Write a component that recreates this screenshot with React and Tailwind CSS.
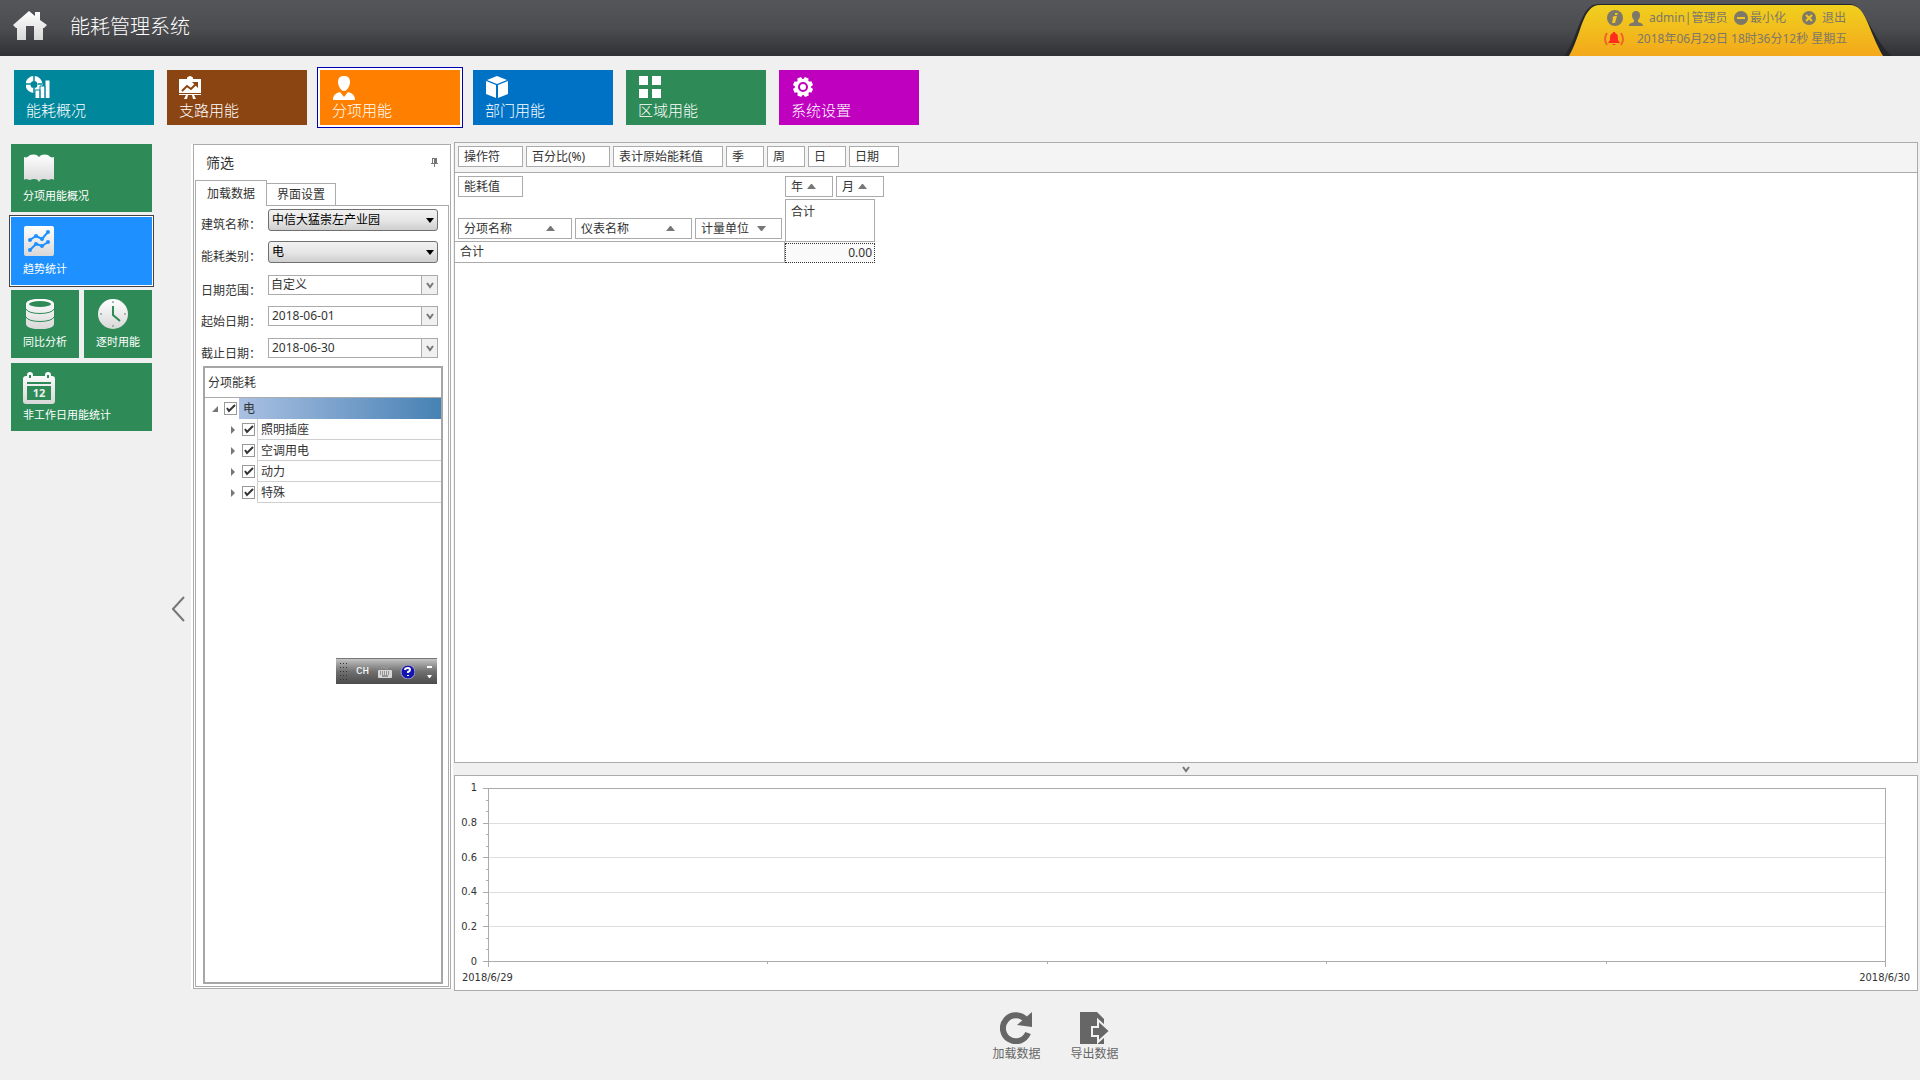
import React, { useState } from "react";

const navItems = [
  { label: "能耗概况", color: "bg-[#00879c]", icon: OverviewIcon },
  { label: "支路用能", color: "bg-[#8b4513]", icon: BoardIcon },
  { label: "分项用能", color: "bg-[#ff8000]", icon: PersonIcon, active: true },
  { label: "部门用能", color: "bg-[#0072c6]", icon: CubeIcon },
  { label: "区域用能", color: "bg-[#2e8b57]", icon: SquaresIcon },
  { label: "系统设置", color: "bg-[#bf00bf]", icon: GearIcon },
];

function OverviewIcon() {
  return (
    <svg viewBox="0 0 24 22" className="h-[22px] w-6" fill="#fff">
      <path
        fillRule="evenodd"
        d="M8 0A8 8 0 1 1 8 17A8 8 0 1 1 8 0ZM8 5A3.500 3.500 0 1 0 8 12A3.500 3.500 0 1 0 8 5Z"
      />
      <path stroke="#00879c" strokeWidth="1.500" d="M8 0V5M8 12V17M0 8H5M12 8H16" />
      <path stroke="#00879c" strokeWidth="1" d="M9 14h5v9h-5zM14 10h5v13h-5zM19 4h5v19h-5z" />
    </svg>
  );
}

function BoardIcon() {
  return (
    <svg viewBox="0 0 22 23" className="h-[23px] w-[22px]">
      <path fill="#fff" d="M8 2Q8 1 9 1Q11-1 13 1Q14 1 14 2V3H22V17H0V3H8ZM0 18H22V19H0ZM7 19H9L8 23H5ZM13 19H15L17 23H14Z" />
      <path fill="none" stroke="#8b4513" strokeWidth="2" d="M3 15L8 10L12 13L17 8" />
      <path fill="#8b4513" d="M13 6H19V12Z" />
    </svg>
  );
}

function PersonIcon() {
  return (
    <svg viewBox="0 0 22 24" className="ml-px h-6 w-[22px]" fill="#fff">
      <path d="M11 0C15 0 17 2 17 6C17 10 14 15 11 15C8 15 5 10 5 6C5 2 7 0 11 0Z" />
      <path d="M7 16L11 21L15 16C19 17 22 19 22 24H0C0 19 3 17 7 16Z" />
    </svg>
  );
}

function CubeIcon() {
  return (
    <svg viewBox="0 0 22 22" className="ml-px h-[22px] w-[22px]" fill="#fff">
      <path d="M11 0L21 4L11 8L1 4ZM0 5L10 9V22L0 18ZM22 5L12 9V22L22 18Z" />
    </svg>
  );
}

function SquaresIcon() {
  return (
    <svg viewBox="0 0 22 22" className="ml-px h-[22px] w-[22px]" fill="#fff">
      <path d="M0 0h9v9H0zM13 0h9v9h-9zM0 13h9v9H0zM13 13h9v9h-9z" />
    </svg>
  );
}

function GearIcon() {
  return (
    <svg viewBox="0 0 22 22" className="ml-px h-[22px] w-[22px]">
      <g fill="#fff">
        <circle cx="11" cy="11" r="8" />
        {[22, 67, 112, 157, 202, 247, 292, 337].map((a) => (
          <path key={a} d="M8 5L9 1H13L14 5Z" transform={`rotate(${a} 11 11)`} />
        ))}
      </g>
      <circle cx="11" cy="11" r="4" fill="none" stroke="#bf00bf" strokeWidth="2" />
    </svg>
  );
}

function Shade({ id }) {
  return (
    <defs>
      <linearGradient id={id} x1="0" y1="0" x2="0" y2="1">
        <stop offset="0" stopColor="#fff" />
        <stop offset="1" stopColor="#d8d8d8" />
      </linearGradient>
    </defs>
  );
}

function BookIcon() {
  return (
    <svg viewBox="0 0 30 28" className="ml-px h-[30px] w-[30px]">
      <Shade id="book" />
      <path
        fill="url(#book)"
        d="M0 3C2 4 4 3 6 1C9 0 13 0 15 3C17 0 21 0 24 1C26 3 28 4 30 3V26C28 24 26 26 24 26C21 25 17 24 15 28C13 24 9 25 6 26C4 26 2 24 0 26Z"
      />
    </svg>
  );
}

function TrendIcon() {
  return (
    <svg viewBox="0 0 30 30" className="ml-px h-[30px] w-[30px]">
      <Shade id="trend" />
      <rect width="30" height="30" rx="2" fill="url(#trend)" />
      <g fill="none" stroke="#1e90ff" strokeWidth="2">
        <path d="M6 14L12 10L18 13L24 6" />
        <path d="M6 24L12 18L18 20L24 16" />
      </g>
      <g fill="#1e90ff">
        <circle cx="6" cy="14" r="2" />
        <circle cx="12" cy="10" r="2" />
        <circle cx="18" cy="13" r="2" />
        <circle cx="24" cy="6" r="2" />
        <circle cx="6" cy="24" r="2" />
        <circle cx="12" cy="18" r="2" />
        <circle cx="18" cy="20" r="2" />
        <circle cx="24" cy="16" r="2" />
      </g>
    </svg>
  );
}

function DatabaseIcon() {
  return (
    <svg viewBox="0 0 30 30" className="ml-px h-[30px] w-[30px]">
      <Shade id="db" />
      <path fill="url(#db)" d="M2 5C2-2 30-2 30 5V25C30 32 2 32 2 25Z" />
      <ellipse cx="16" cy="5" rx="11" ry="3" fill="#2e8b57" />
      <g fill="none" stroke="#2e8b57" strokeWidth="1">
        <path d="M2 10C4 16 28 16 30 10M2 18C4 24 28 24 30 18" />
      </g>
    </svg>
  );
}

function ClockIcon() {
  return (
    <svg viewBox="0 0 30 30" className="ml-[2px] h-[30px] w-[30px]">
      <Shade id="clock" />
      <circle cx="15" cy="15" r="15" fill="url(#clock)" />
      <path fill="none" stroke="#2e8b57" strokeWidth="2" d="M15 7V16L22 22" />
      <g fill="#8aa898">
        <circle cx="15" cy="3" r="1" />
        <circle cx="15" cy="27" r="1" />
        <circle cx="3" cy="15" r="1" />
        <circle cx="27" cy="15" r="1" />
      </g>
    </svg>
  );
}

function CalendarIcon() {
  return (
    <svg viewBox="0 0 32 32" className="h-8 w-8">
      <Shade id="cal" />
      <path
        fill="url(#cal)"
        fillRule="evenodd"
        d="M3 4H4V3Q4 0 7 0Q10 0 10 3V4H22V3Q22 0 25 0Q28 0 28 3V4H29Q32 4 32 7V29Q32 32 29 32H3Q0 32 0 29V7Q0 4 3 4ZM4 10V12H28V10ZM4 14V28H28V14ZM6 3V6H8V3ZM24 3V6H26V3Z"
      />
      <text x="16" y="25" textAnchor="middle" fontSize="11" fontWeight="700" fontFamily="Noto Sans, sans-serif" fill="#eee">
        12
      </text>
    </svg>
  );
}

function SideTile({ label, icon: Icon, active, wide }) {
  return (
    <button
      type="button"
      className={
        "flex h-[68px] flex-col items-start justify-between pt-[9px] pb-2 pl-3 text-left text-[11px] leading-4 text-white " +
        (wide ? "col-span-2 " : "") +
        (active
          ? "bg-[#1e90ff] shadow-[0_0_0_1px_#fff,0_0_0_2px_#444] "
          : "bg-[#2e8b57] ")
      }
    >
      <Icon />
      <span className="whitespace-nowrap">{label}</span>
    </button>
  );
}

function Chip({ children, width, sort }) {
  return (
    <button
      type="button"
      className={
        "flex h-[21px] shrink-0 items-center border border-[#ababab] bg-white pl-[5px] text-left font-normal whitespace-nowrap " +
        width
      }
    >
      <span>{children}</span>
      {sort && (
        <svg
          viewBox="0 0 9 5"
          className={"h-[5px] w-[9px] " + (sort === "down" ? "rotate-180 " : "") + (width === "w-12" ? "ml-1" : width === "w-[87px]" ? "ml-2" : "mr-4 ml-auto")}
          fill="#777"
        >
          <path d="M0 5L4 0H5L9 5Z" />
        </svg>
      )}
    </button>
  );
}

function Chevron() {
  return (
    <svg viewBox="0 0 8 7" className="h-[7px] w-2" fill="none" stroke="#777" strokeWidth="2">
      <path d="M1 1L4 5L7 1" />
    </svg>
  );
}

function FieldRow({ id, label, height, children }) {
  return (
    <div className={"flex " + height}>
      <label htmlFor={id} className="w-[67px] shrink-0 pt-2 leading-4 whitespace-nowrap">
        {label}
      </label>
      {children}
    </div>
  );
}

function GlossySelect({ id, value }) {
  return (
    <div className="relative h-[22px] min-w-0 flex-1">
      <select
        id={id}
        defaultValue={value}
        className="block h-full w-full appearance-none rounded-[3px] border border-[#707070] bg-linear-to-b from-[#f2f2f2] via-[#e6e6e6] to-[#cfcfcf] pl-[3px] text-xs text-black"
      >
        <option>{value}</option>
      </select>
      <svg viewBox="0 0 8 5" className="pointer-events-none absolute top-[9px] right-1 h-[5px] w-2">
        <path d="M0 0H8L4 5Z" />
      </svg>
    </div>
  );
}

function FlatBox({ children, name }) {
  return (
    <div className="flex h-5 min-w-0 flex-1 border border-[#ababab] bg-white">
      {children}
      <button
        type="button"
        aria-label={name}
        className="flex w-4 shrink-0 items-center justify-center border-l border-[#ababab] bg-[#f0f0f0]"
      >
        <Chevron />
      </button>
    </div>
  );
}

function TreeCheck({ id }) {
  return (
    <span className="relative flex h-[13px] w-[13px] shrink-0">
      <input
        id={id}
        type="checkbox"
        defaultChecked
        className="peer h-[13px] w-[13px] appearance-none border border-[#999] bg-white"
      />
      <svg
        viewBox="0 0 13 13"
        className="pointer-events-none absolute inset-0 hidden peer-checked:block"
        fill="none"
        stroke="#333"
        strokeWidth="2"
      >
        <path d="M3 6L5 9L11 3" />
      </svg>
    </span>
  );
}

function Header() {
  return (
    <header className="flex h-14 items-start justify-between bg-linear-to-b from-[#55565a] via-[#4c4d51] to-[#2f3234]">
      <div className="flex items-center pt-[7px] pl-[13px]">
        <svg viewBox="0 0 34 29" className="h-[29px] w-[34px]">
          <Shade id="home" />
          <path fill="url(#home)" d="M0 14L16 0L22 5V1H27V9L34 14L31 17H30V29H21V15H13V29H4V17H3Z" />
        </svg>
        <h1 className="pt-1 pl-[23px] text-xl leading-8 font-light text-white">能耗管理系统</h1>
      </div>
      <div className="relative mr-7 h-14 w-[332px] text-xs text-[#7d7868]">
        <svg viewBox="0 0 332 56" className="absolute inset-0 h-14 w-[332px]">
          <defs>
            <linearGradient id="gold" x1="0" y1="0" x2="0" y2="1">
              <stop offset="0" stopColor="#f0d01e" />
              <stop offset="1" stopColor="#f3a81b" />
            </linearGradient>
          </defs>
          <path fill="#26272a" d="M4 56C18 40 20 4 38 4H290C306 5 312 40 332 56Z" />
          <path fill="url(#gold)" d="M9 56C22 34 22 5 40 5H290C306 5 308 30 323 56Z" />
        </svg>
        <div className="relative flex h-5 items-center pt-4 pl-[47px]">
          <svg viewBox="0 0 16 16" className="h-4 w-4">
            <circle cx="8" cy="8" r="8" fill="#7d7868" />
            <path fill="#f0c81f" d="M8 3H11L10 5H8ZM7 6H10L8 13H5L6 8H5Z" />
          </svg>
          <svg viewBox="0 0 14 15" className="ml-[6px] h-[15px] w-[14px]" fill="#7d7868">
            <path d="M7 0C10 0 11 2 11 4C11 7 10 8 9 9V11C11 12 14 12 14 15H0C0 12 3 12 5 11V9C4 8 3 7 3 4C3 2 4 0 7 0Z" />
          </svg>
          <span className="ml-[6px] w-[85px] whitespace-nowrap">admin|管理员</span>
          <button type="button" className="flex items-center whitespace-nowrap">
            <svg viewBox="0 0 14 14" className="mr-[2px] h-[14px] w-[14px]">
              <circle cx="7" cy="7" r="7" fill="#7d7868" />
              <path fill="#f0c81f" d="M3 6H11V8H3Z" />
            </svg>
            最小化
          </button>
          <button type="button" className="ml-4 flex items-center whitespace-nowrap">
            <svg viewBox="0 0 14 14" className="mr-[6px] h-[14px] w-[14px]">
              <circle cx="7" cy="7" r="7" fill="#7d7868" />
              <path stroke="#f0c81f" strokeWidth="2" d="M4 4L10 10M10 4L4 10" />
            </svg>
            退出
          </button>
        </div>
        <div className="relative flex items-center pt-[11px] pl-11">
          <svg viewBox="0 0 20 14" className="h-[14px] w-5">
            <path fill="#ff2d1e" d="M9 0H11V1C14 2 14 4 14 8L16 11H4L6 8C6 4 6 2 9 1ZM8 12H12Q10 14 8 12Z" />
            <path fill="none" stroke="#f3622a" strokeWidth="2" d="M3 1Q-1 7 3 13M17 1Q21 7 17 13" />
          </svg>
          <time className="ml-[13px] leading-4 whitespace-nowrap">2018年06月29日 18时36分12秒 星期五</time>
        </div>
      </div>
    </header>
  );
}

function FilterPanel() {
  const [tab, setTab] = useState(0);
  return (
    <section className="mt-[2px] mb-[2px] flex w-[262px] shrink-0 flex-col bg-white px-[2px]">
      <div className="flex flex-1 flex-col border border-[#ababab] px-px pb-px">
        <div className="flex h-[35px] items-center justify-between pr-[11px] pl-[11px]">
          <h2 className="text-sm">筛选</h2>
          <button type="button" aria-label="固定">
            <svg viewBox="0 0 7 9" className="h-[9px] w-[7px]" fill="#777">
              <path d="M1 0H6V5H7V6H4V9H3V6H0V5H1ZM2 1V5H3V1Z" />
            </svg>
          </button>
        </div>
        <div className="flex items-end" role="tablist">
          <button
            type="button"
            role="tab"
            aria-selected={tab === 0}
            onClick={() => setTab(0)}
            className="relative -mb-px h-[26px] w-[72px] border border-b-0 border-[#ababab] bg-white leading-6"
          >
            加载数据
          </button>
          <button
            type="button"
            role="tab"
            aria-selected={tab === 1}
            onClick={() => setTab(1)}
            className="h-[22px] w-[69px] border border-b-0 border-l-0 border-[#ababab] bg-white leading-5"
          >
            界面设置
          </button>
        </div>
        <div className="flex flex-1 flex-col border border-[#ababab] px-[5px] pt-[3px] pb-[2px]">
          <FieldGroup />
          <div className="relative ml-[2px] flex flex-1 flex-col border-2 border-[#a6a6a6]">
            <h3 className="h-[30px] border-b border-[#ababab] pl-[3px] leading-[30px]">分项能耗</h3>
            <Tree />
            <ImeBar />
          </div>
        </div>
      </div>
    </section>
  );
}

function FieldGroup() {
  return (
    <form className="pr-[5px]">
      <FieldRow id="building" label="建筑名称：" height="h-8">
        <GlossySelect id="building" value="中信大猛崇左产业园" />
      </FieldRow>
      <FieldRow id="kind" label="能耗类别：" height="h-[34px]">
        <GlossySelect id="kind" value="电" />
      </FieldRow>
      <FieldRow id="range" label="日期范围：" height="h-[31px]">
        <FlatBox name="选择范围">
          <select id="range" className="min-w-0 flex-1 appearance-none pl-[2px] text-xs">
            <option>自定义</option>
          </select>
        </FlatBox>
      </FieldRow>
      <FieldRow id="start" label="起始日期：" height="h-8">
        <FlatBox name="选择起始日期">
          <input id="start" defaultValue="2018-06-01" className="min-w-0 flex-1 pl-[3px] text-xs" />
        </FlatBox>
      </FieldRow>
      <FieldRow id="end" label="截止日期：" height="h-7">
        <FlatBox name="选择截止日期">
          <input id="end" defaultValue="2018-06-30" className="min-w-0 flex-1 pl-[3px] text-xs" />
        </FlatBox>
      </FieldRow>
    </form>
  );
}

function Tree() {
  return (
    <ul>
      <li>
        <div className="flex h-[21px] items-center pl-[7px]">
          <svg viewBox="0 0 6 6" className="mr-[6px] h-[6px] w-[6px]" fill="#777">
            <path d="M6 0V6H0Z" />
          </svg>
          <TreeCheck id="tree-root" />
          <label
            htmlFor="tree-root"
            className="ml-[2px] h-full flex-1 bg-linear-to-r from-[#a9c0e2] to-[#4682b4] pl-1 leading-[22px]"
          >
            电
          </label>
        </div>
        <ul>
          {["照明插座", "空调用电", "动力", "特殊"].map((name, i) => (
            <li key={name} className="flex h-[21px] items-center pl-[26px]">
              <svg viewBox="0 0 4 8" className="mr-[7px] h-2 w-1" fill="#777">
                <path d="M0 0L4 4L0 8Z" />
              </svg>
              <TreeCheck id={"tree-" + i} />
              <label
                htmlFor={"tree-" + i}
                className="ml-[2px] h-full flex-1 border-b border-l border-[#cfcfcf] pl-[3px] leading-[22px]"
              >
                {name}
              </label>
            </li>
          ))}
        </ul>
      </li>
    </ul>
  );
}

function ImeBar() {
  return (
    <div className="absolute top-[290px] right-1 flex h-[26px] w-[101px] items-center border-t border-[#777] bg-linear-to-b from-[#c4c4c4] via-[#707070] to-[#4c4c4c] pl-1 text-white">
      <svg viewBox="0 0 9 18" className="h-[18px] w-[9px]" fill="#333">
        {[0, 4, 8, 12, 16].map((y) => (
          <path key={y} d={`M0 ${y}h1v1h-1zM3 ${y}h1v1h-1zM6 ${y}h1v1h-1z`} />
        ))}
      </svg>
      <span className="ml-[7px] w-[13px] font-['Liberation_Mono',monospace] text-[11px]">CH</span>
      <svg viewBox="0 0 14 12" className="ml-[9px] h-3 w-[14px]">
        <path fill="none" stroke="#999" d="M3 3Q4 0 7 2T11 0" />
        <rect y="4" width="14" height="8" rx="1" fill="#d8d8d8" />
        <path stroke="#555" strokeDasharray="1 1" d="M2 6H12M2 8H12" />
        <path stroke="#555" d="M4 10H10" />
      </svg>
      <svg viewBox="0 0 15 15" className="ml-2 h-[15px] w-[15px]">
        <circle cx="8" cy="8" r="7" fill="#1414b4" stroke="#aab" />
        <path fill="none" stroke="#fff" strokeWidth="2" d="M5 6Q5 4 8 4Q10 4 10 6Q10 7 8 8V9M8 11V12" />
      </svg>
      <svg viewBox="0 0 5 12" className="ml-3 h-3 w-[5px]" fill="#fff">
        <path d="M0 0H5V2H0ZM0 9H5L3 12H2Z" />
      </svg>
    </div>
  );
}

function PivotPanel() {
  return (
    <section className="flex flex-1 flex-col border border-[#ababab] bg-white">
      <div className="flex h-[30px] gap-[3px] border-b border-[#ababab] bg-[#f4f4f4] pt-[3px] pl-[3px]">
        <Chip width="w-[65px]">操作符</Chip>
        <Chip width="w-[84px]">百分比(%)</Chip>
        <Chip width="w-[110px]">表计原始能耗值</Chip>
        <Chip width="w-[38px]">季</Chip>
        <Chip width="w-[38px]">周</Chip>
        <Chip width="w-[38px]">日</Chip>
        <Chip width="w-[50px]">日期</Chip>
      </div>
      <table className="w-[429px] table-fixed border-separate border-spacing-0">
        <colgroup>
          <col className="w-[330px]" />
          <col className="w-[90px]" />
          <col />
        </colgroup>
        <thead>
          <tr className="h-[26px]">
            <th className="p-0 pl-[3px] align-top">
              <div className="pt-[3px]">
                <Chip width="w-[65px]">能耗值</Chip>
              </div>
            </th>
            <th colSpan={2} className="p-0 align-top">
              <div className="flex gap-[3px] pt-[3px]">
                <Chip width="w-12" sort="up">年</Chip>
                <Chip width="w-12" sort="up">月</Chip>
              </div>
            </th>
          </tr>
          <tr className="h-[43px]">
            <th className="border-b border-[#ababab] p-0 pb-[2px] pl-[3px] align-bottom">
              <div className="flex gap-[3px]">
                <Chip width="w-[114px]" sort="up">分项名称</Chip>
                <Chip width="w-[117px]" sort="up">仪表名称</Chip>
                <Chip width="w-[87px]" sort="down">计量单位</Chip>
              </div>
            </th>
            <th scope="col" className="border border-[#ababab] p-0 pt-1 pl-[5px] text-left align-top leading-4 font-normal">
              合计
            </th>
          </tr>
        </thead>
        <tbody>
          <tr className="h-[21px]">
            <th scope="row" className="border-r border-b border-[#ababab] p-0 pl-[5px] text-left leading-5 font-normal">
              合计
            </th>
            <td className="bg-[#fafafa] p-0 text-right leading-[18px]">
              <div className="border border-dotted border-[#333] pr-[2px]">0.00</div>
            </td>
          </tr>
        </tbody>
      </table>
    </section>
  );
}

function ChartPanel() {
  return (
    <section className="border border-[#ababab] bg-white pt-3 pb-1 font-['DejaVu_Sans_Condensed','DejaVu_Sans',sans-serif] text-[11px] font-stretch-condensed">
      <div className="flex h-[174px] pr-[31px]">
        <div className="-my-2 flex w-7 flex-col justify-between pr-[6px] text-right leading-4">
          {["1", "0.8", "0.6", "0.4", "0.2", "0"].map((v) => (
            <span key={v}>{v}</span>
          ))}
        </div>
        <div className="flex w-[5px] flex-col items-end justify-between">
          {Array.from({ length: 16 }, (_, i) => (
            <span key={i} className={"h-px bg-[#ababab] " + (i % 3 === 0 ? "w-[5px]" : "w-[2px]")} />
          ))}
        </div>
        <div className="flex flex-1 flex-col border border-[#ababab]">
          {[0, 1, 2, 3].map((i) => (
            <div key={i} className="flex-1 border-b border-[#dedede]" />
          ))}
          <div className="flex-1" />
        </div>
      </div>
      <div className="mr-[31px] ml-[33px] flex h-[5px] items-start justify-between">
        {[0, 1, 2, 3, 4, 5].map((i) => (
          <span key={i} className={"w-px bg-[#ababab] " + (i % 5 === 0 ? "h-[5px]" : "h-[2px]")} />
        ))}
      </div>
      <div className="flex justify-between pt-[3px] pr-[7px] pl-[7px] leading-4">
        <span>2018/6/29</span>
        <span>2018/6/30</span>
      </div>
    </section>
  );
}

export default function App() {
  return (
    <div className="flex min-h-screen flex-col bg-[#f0f0f0] font-['Noto_Sans','Noto_Sans_CJK_SC',sans-serif] text-xs text-[#333]">
      <Header />
      <nav className="flex gap-[13px] pt-[14px] pb-[17px] pl-[14px]">
        {navItems.map(({ label, color, icon: Icon, active }) => (
          <button
            key={label}
            type="button"
            aria-current={active ? "page" : undefined}
            className={
              "flex h-[55px] w-[140px] flex-col items-start justify-between pt-[6px] pb-[5px] pl-3 text-left text-[15px] leading-5 font-light text-white " +
              color +
              (active ? " shadow-[0_0_0_2px_#fff,0_0_0_3px_#0000b4]" : "")
            }
          >
            <Icon />
            <span>{label}</span>
          </button>
        ))}
      </nav>
      <div className="flex flex-1">
        <aside className="grid w-[152px] shrink-0 grid-cols-2 content-start gap-[5px] pt-[2px] pl-[11px]">
          <SideTile label="分项用能概况" icon={BookIcon} wide />
          <SideTile label="趋势统计" icon={TrendIcon} wide active />
          <SideTile label="同比分析" icon={DatabaseIcon} />
          <SideTile label="逐时用能" icon={ClockIcon} />
          <SideTile label="非工作日用能统计" icon={CalendarIcon} wide />
        </aside>
        <button type="button" aria-label="收起" className="flex w-[39px] shrink-0 items-center justify-end pr-[6px] pb-1">
          <svg viewBox="0 0 13 26" className="h-[26px] w-[13px]" fill="none" stroke="#777" strokeWidth="2">
            <path d="M12 1L1 13L12 25" />
          </svg>
        </button>
        <div className="flex flex-1 flex-col">
          <main className="flex flex-1 gap-px pr-[2px]">
            <FilterPanel />
            <div className="flex flex-1 flex-col">
              <PivotPanel />
              <button type="button" aria-label="折叠图表" className="flex h-3 items-center justify-center">
                <Chevron />
              </button>
              <ChartPanel />
            </div>
          </main>
          <footer className="flex h-[89px] items-start justify-center gap-[30px] pt-[21px] text-[#666]">
            <button type="button" className="flex flex-col items-center">
              <svg viewBox="0 0 32 32" className="h-8 w-8">
                <path fill="none" stroke="#666" strokeWidth="6" d="M26 8A13 13 0 1 0 28 21" />
                <path fill="#666" d="M32 0V15L17 13Z" />
              </svg>
              <span className="leading-5">加载数据</span>
            </button>
            <button type="button" className="flex flex-col items-center">
              <svg viewBox="0 0 32 32" className="h-8 w-8">
                <path fill="#666" d="M1 0H18L25 7V32H1Z" />
                <path fill="#666" stroke="#f0f0f0" strokeWidth="2" d="M13 15H19V8L31 19L19 30V24H13Z" />
              </svg>
              <span className="leading-5">导出数据</span>
            </button>
          </footer>
        </div>
      </div>
    </div>
  );
}
